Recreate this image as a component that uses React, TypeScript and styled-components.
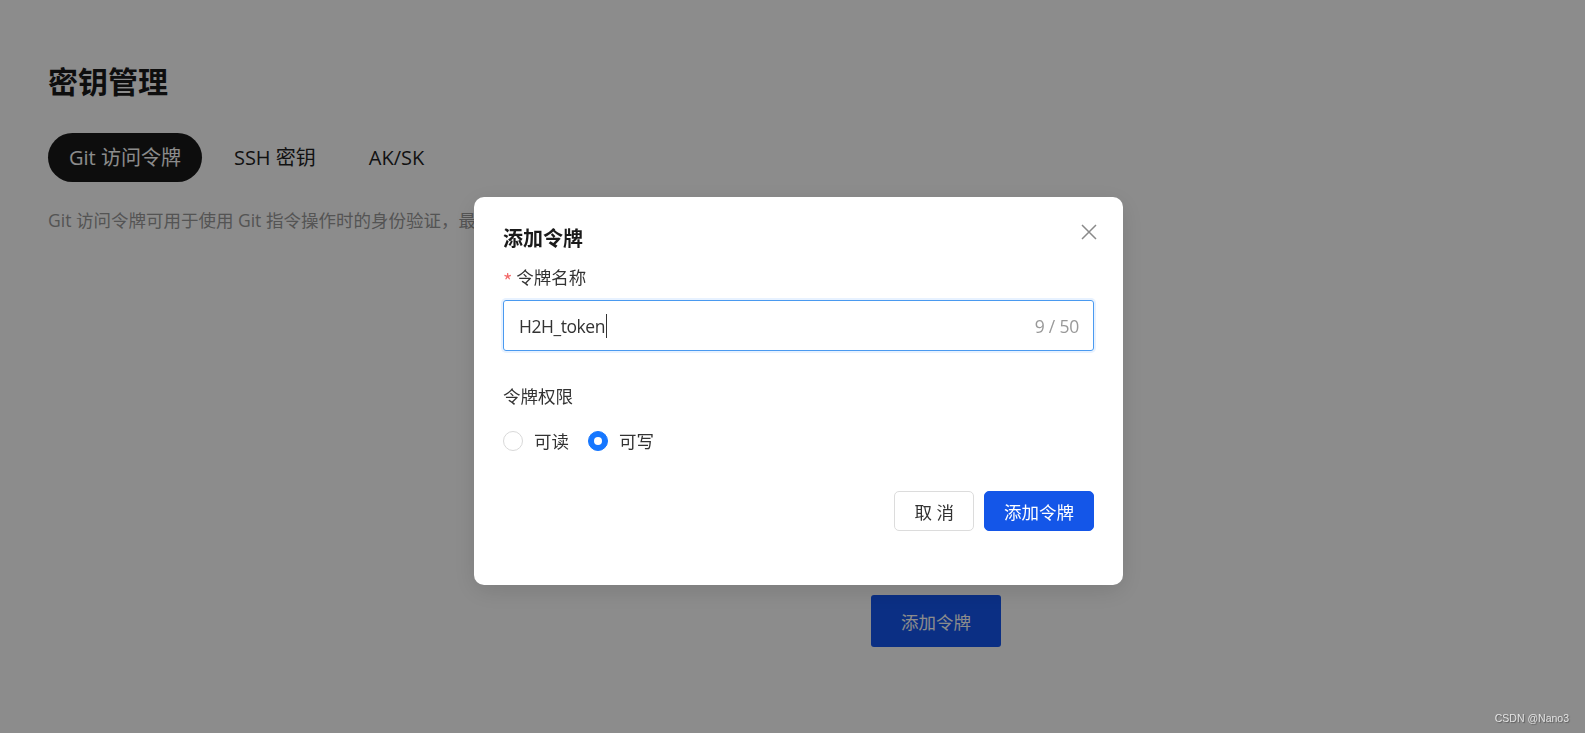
import React from "react";
import styled, { createGlobalStyle } from "styled-components";

const GlobalStyle = createGlobalStyle`
  html, body { margin: 0; padding: 0; background: #ffffff; }
  body { font-family: "Open Sans", "Noto Sans CJK SC", sans-serif; }
  * { box-sizing: border-box; }
`;

const Page = styled.main`
  min-height: 733px;
  padding: 60px 48px 0;
  background: #ffffff;
`;

const PageTitle = styled.h1`
  margin: 0;
  font-size: 30px;
  line-height: 44px;
  font-weight: 700;
  color: #1a1a1a;
`;

const Tabs = styled.nav`
  display: flex;
  gap: 11px;
  margin-top: 29px;
`;

const Tab = styled.button<{ $active?: boolean }>`
  height: 49px;
  padding: 0 21px;
  border: 0;
  border-radius: 25px;
  font-family: inherit;
  font-size: 20px;
  line-height: 49px;
  background: ${(p) => (p.$active ? "#181818" : "transparent")};
  color: ${(p) => (p.$active ? "#ffffff" : "#1f1f1f")};
`;

const Description = styled.p`
  margin: 26px 0 0;
  font-size: 17.5px;
  line-height: 24px;
  color: #999999;
`;

const EmptyState = styled.section`
  display: flex;
  margin-top: 363px;
  padding-left: 823px;
`;

const BigButton = styled.button`
  width: 130px;
  height: 52px;
  border: 0;
  border-radius: 3px;
  background: #1456f0;
  color: #ffffff;
  font-family: inherit;
  font-size: 17.5px;
`;

const Overlay = styled.div`
  position: fixed;
  inset: 0;
  background: rgba(0, 0, 0, 0.45);
  display: flex;
  align-items: flex-start;
  justify-content: flex-start;
  padding: 197px 0 0 474px;
`;

const Modal = styled.div`
  position: relative;
  width: 649px;
  background: #ffffff;
  border-radius: 10px;
  padding: 28px 29px 54px;
  box-shadow: 0 6px 24px rgba(0, 0, 0, 0.12);
`;

const ModalTitle = styled.h2`
  margin: 0;
  font-size: 20px;
  line-height: 28px;
  font-weight: 700;
  color: #1a1a1a;
`;

const CloseButton = styled.button`
  position: absolute;
  top: 27px;
  right: 26px;
  width: 16px;
  height: 16px;
  padding: 0;
  border: 0;
  background: none;
  display: flex;
  color: #8a8a8a;
`;

const FieldLabel = styled.label<{ $gap: number }>`
  display: flex;
  align-items: center;
  margin-top: ${(p) => p.$gap}px;
  font-size: 17.5px;
  line-height: 24px;
  color: #333333;
`;

const Required = styled.span`
  color: #f36b6b;
  font-family: "Noto Sans CJK SC", sans-serif;
  font-size: 20px;
  line-height: 24px;
  margin-right: 4px;
  position: relative;
  top: 4px;
`;

const InputBox = styled.div`
  margin-top: 11px;
  height: 51px;
  display: flex;
  align-items: center;
  justify-content: space-between;
  padding: 0 14px 0 15px;
  border: 1px solid #4a9af0;
  border-radius: 3px;
  box-shadow: 0 0 0 2px rgba(64, 150, 255, 0.12);
  font-size: 17.5px;
  color: #333333;
`;

const InputValue = styled.span`
  display: flex;
  align-items: center;
  letter-spacing: -0.45px;
`;

const Caret = styled.span`
  width: 1px;
  height: 24px;
  margin-left: 1px;
  background: #333333;
`;

const Counter = styled.span`
  color: #999999;
  letter-spacing: -0.2px;
`;

const RadioGroup = styled.div`
  display: flex;
  align-items: center;
  gap: 19px;
  margin-top: 21px;
  height: 24px;
`;

const RadioItem = styled.label`
  display: flex;
  align-items: center;
  gap: 11px;
  font-size: 17.5px;
  line-height: 24px;
  color: #333333;
`;

const RadioCircle = styled.span<{ $checked?: boolean }>`
  width: 20px;
  height: 20px;
  border-radius: 50%;
  display: flex;
  align-items: center;
  justify-content: center;
  border: 1px solid ${(p) => (p.$checked ? "#1677ff" : "#d9d9d9")};
  background: ${(p) => (p.$checked ? "#1677ff" : "#ffffff")};
  &::after {
    content: "";
    display: ${(p) => (p.$checked ? "block" : "none")};
    width: 8px;
    height: 8px;
    border-radius: 50%;
    background: #ffffff;
  }
`;

const Footer = styled.div`
  display: flex;
  justify-content: flex-end;
  gap: 10px;
  margin-top: 38px;
`;

const Button = styled.button<{ $primary?: boolean }>`
  height: 40px;
  padding: 0 19px;
  border-radius: 5px;
  font-family: inherit;
  font-size: 17.5px;
  border: 1px solid ${(p) => (p.$primary ? "#1456e8" : "#dcdcdc")};
  background: ${(p) => (p.$primary ? "#1456e8" : "#ffffff")};
  color: ${(p) => (p.$primary ? "#ffffff" : "#333333")};
`;

const Watermark = styled.span`
  position: fixed;
  right: 16px;
  bottom: 9px;
  font-family: "Liberation Sans", sans-serif;
  font-size: 10.5px;
  color: rgba(255, 255, 255, 0.78);
  text-shadow: 1px 1px 1px rgba(0, 0, 0, 0.35);
`;

export default function App() {
  return (
    <>
      <GlobalStyle />
      <Page>
        <PageTitle>密钥管理</PageTitle>
        <Tabs>
          <Tab $active>Git 访问令牌</Tab>
          <Tab>SSH 密钥</Tab>
          <Tab>AK/SK</Tab>
        </Tabs>
        <Description>Git 访问令牌可用于使用 Git 指令操作时的身份验证，最</Description>
        <EmptyState>
          <BigButton>添加令牌</BigButton>
        </EmptyState>
      </Page>
      <Overlay>
        <Modal>
          <ModalTitle>添加令牌</ModalTitle>
          <CloseButton aria-label="关闭">
            <svg width="16" height="16" viewBox="0 0 16 16">
              <path d="M1 1L15 15M15 1L1 15" stroke="currentColor" strokeWidth="1.5" fill="none" />
            </svg>
          </CloseButton>
          <FieldLabel $gap={12}>
            <Required>*</Required>令牌名称
          </FieldLabel>
          <InputBox>
            <InputValue>
              H2H_token
              <Caret />
            </InputValue>
            <Counter>9 / 50</Counter>
          </InputBox>
          <FieldLabel $gap={33}>令牌权限</FieldLabel>
          <RadioGroup>
            <RadioItem>
              <RadioCircle />
              可读
            </RadioItem>
            <RadioItem>
              <RadioCircle $checked />
              可写
            </RadioItem>
          </RadioGroup>
          <Footer>
            <Button>取 消</Button>
            <Button $primary>添加令牌</Button>
          </Footer>
        </Modal>
      </Overlay>
      <Watermark>CSDN @Nano3</Watermark>
    </>
  );
}
